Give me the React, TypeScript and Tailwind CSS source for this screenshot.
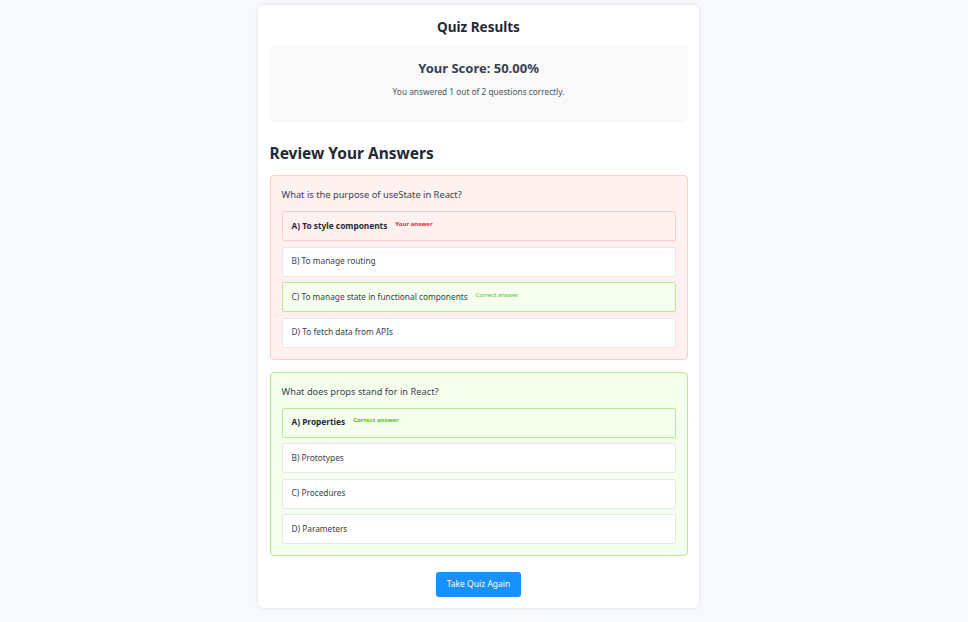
import React from "react";

type Opt = { text: string; state?: "wrong" | "correct"; bold?: boolean; label?: string; labelBold?: boolean };
type Q = { q: string; ok: boolean; opts: Opt[] };

const data: Q[] = [
  {
    q: "What is the purpose of useState in React?",
    ok: false,
    opts: [
      { text: "A) To style components", state: "wrong", bold: true, label: "Your answer", labelBold: true },
      { text: "B) To manage routing" },
      { text: "C) To manage state in functional components", state: "correct", label: "Correct answer" },
      { text: "D) To fetch data from APIs" },
    ],
  },
  {
    q: "What does props stand for in React?",
    ok: true,
    opts: [
      { text: "A) Properties", state: "correct", bold: true, label: "Correct answer", labelBold: true },
      { text: "B) Prototypes" },
      { text: "C) Procedures" },
      { text: "D) Parameters" },
    ],
  },
];

export default function App() {
  return (
    <div
      className="min-h-[622px] bg-[#f7f9fc] flex justify-center pr-[12px] pt-[5px] text-[#262626]"
      style={{ fontFamily: '"Noto Sans", "Open Sans", sans-serif' }}
    >
      <div className="w-[441px] h-[603px] bg-white rounded-[6px] shadow-[0_0_4px_rgba(0,0,0,0.12)] pl-[12px] pr-[11px] pt-[12px]">
        <h1 className="text-center text-[13.5px] font-bold leading-[20px] text-[#1f2937]">Quiz Results</h1>
        <div className="mt-[9px] h-[77px] bg-[#f9f9f9] rounded-[6px] pt-[12px] text-center">
          <div className="text-[13px] font-bold leading-[20px] text-[#374151]">Your Score: 50.00%</div>
          <div className="mt-[8px] text-[8.3px] leading-[12px] text-[#4b5563]">You answered 1 out of 2 questions correctly.</div>
        </div>
        <h2 className="mt-[19px] text-[15.5px] font-bold leading-[22px] text-[#1f2937]">Review Your Answers</h2>
        <div className="mt-[11px] flex flex-col gap-[12px]">
          {data.map((q, i) => (
            <div
              key={i}
              className={
                "rounded-[4px] border px-[11px] pt-[11px] pb-[11px] " +
                (q.ok ? "bg-[#f6ffed] border-[#b7eb8f]" : "bg-[#fff1f0] border-[#ffccc7]")
              }
            >
              <div className="text-[9.3px] leading-[16px] text-[#374151]">{q.q}</div>
              <div className="mt-[8px] flex flex-col gap-[5.5px]">
                {q.opts.map((o, j) => (
                  <div
                    key={j}
                    className={
                      "h-[30px] rounded-[2px] border flex items-center pl-[9px] text-[8.3px] " +
                      (o.state === "wrong"
                        ? "bg-[#fff1f0] border-[#ffccc7]"
                        : o.state === "correct"
                        ? "bg-[#f6ffed] border-[#b7eb8f]"
                        : "bg-white border-[#e5e7eb]") +
                      (o.bold ? " font-bold text-[#1f2937]" : " text-[#374151]")
                    }
                  >
                    <span>{o.text}</span>
                    {o.label && (
                      <span
                        className={
                          "ml-[8px] text-[6px] relative top-[-2px] " +
                          (o.labelBold ? "font-bold " : "font-normal ") +
                          (o.state === "wrong" ? "text-[#f5222d]" : "text-[#52c41a]")
                        }
                      >
                        {o.label}
                      </span>
                    )}
                  </div>
                ))}
              </div>
            </div>
          ))}
        </div>
        <div className="mt-[16px] flex justify-center">
          <button className="h-[25px] px-[11px] rounded-[3px] bg-[#1890ff] text-white text-[8.5px]">
            Take Quiz Again
          </button>
        </div>
      </div>
    </div>
  );
}
